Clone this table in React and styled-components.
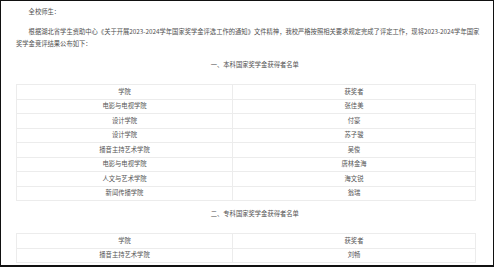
import React from 'react';
import styled, { createGlobalStyle } from 'styled-components';

const undergrad = [
    { college: '电影与电视学院', name: '张佳美' },
    { college: '设计学院', name: '付豪' },
    { college: '设计学院', name: '苏子骏' },
    { college: '播音主持艺术学院', name: '吴俊' },
    { college: '电影与电视学院', name: '唐林金海' },
    { college: '人文与艺术学院', name: '海文锐' },
    { college: '新闻传播学院', name: '翁瑞' },
];

const junior = [
    { college: '播音主持艺术学院', name: '刘畅' },
];

const GlobalStyle = createGlobalStyle`
    html, body {
        margin: 0;
        padding: 0;
        background: #fff;
    }
`;

const Frame = styled.div`
    width: 494px;
    height: 267px;
    box-sizing: border-box;
    border: 1px solid #111;
    border-bottom-width: 2px;
    padding: 5px 12px 0 15px;
    overflow: hidden;
    background: #fff;
    font-family: "Noto Sans CJK SC", "Noto Sans", sans-serif;
    color: #505050;
`;

const Para = styled.p`
    margin: ${(p) => p.$top || 0}px 0 0;
    font-size: 6.3px;
    line-height: 12px;
    text-indent: 2em;
    text-align: ${(p) => (p.$center ? 'center' : 'left')};
`;

const Table = styled.table`
    width: 459px;
    margin-top: 13px;
    border-collapse: collapse;
    table-layout: fixed;
`;

const Row = styled.tr`
    height: 14.5px;
`;

const Cell = styled.td`
    padding: 0;
    border: 1px solid #ececec;
    text-align: center;
    vertical-align: middle;
    font-size: 6.3px;
    line-height: 12px;
    color: #555;
`;

const WinnerTable = ({ rows }) => (
    <Table>
        <colgroup>
            <col style={{ width: 216 }} />
            <col style={{ width: 243 }} />
        </colgroup>
        <tbody>
            <Row>
                <Cell>学院</Cell>
                <Cell>获奖者</Cell>
            </Row>
            {rows.map((r, i) => (
                <Row key={i}>
                    <Cell>{r.college}</Cell>
                    <Cell>{r.name}</Cell>
                </Row>
            ))}
        </tbody>
    </Table>
);

const App = () => (
    <>
        <GlobalStyle />
        <Frame>
            <Para>全校师生：</Para>
            <Para $top={8}>
                根据湖北省学生资助中心《关于开展2023-2024学年国家奖学金评选工作的通知》文件精神，我校严格按照相关要求规定完成了评定工作，现将2023-2024学年国家奖学金竞评结果公布如下：
            </Para>
            <Para $top={9} $center>一、本科国家奖学金获得者名单</Para>
            <WinnerTable rows={undergrad} />
            <Para $top={7} $center>二、专科国家奖学金获得者名单</Para>
            <WinnerTable rows={junior} />
        </Frame>
    </>
);

export default App;
